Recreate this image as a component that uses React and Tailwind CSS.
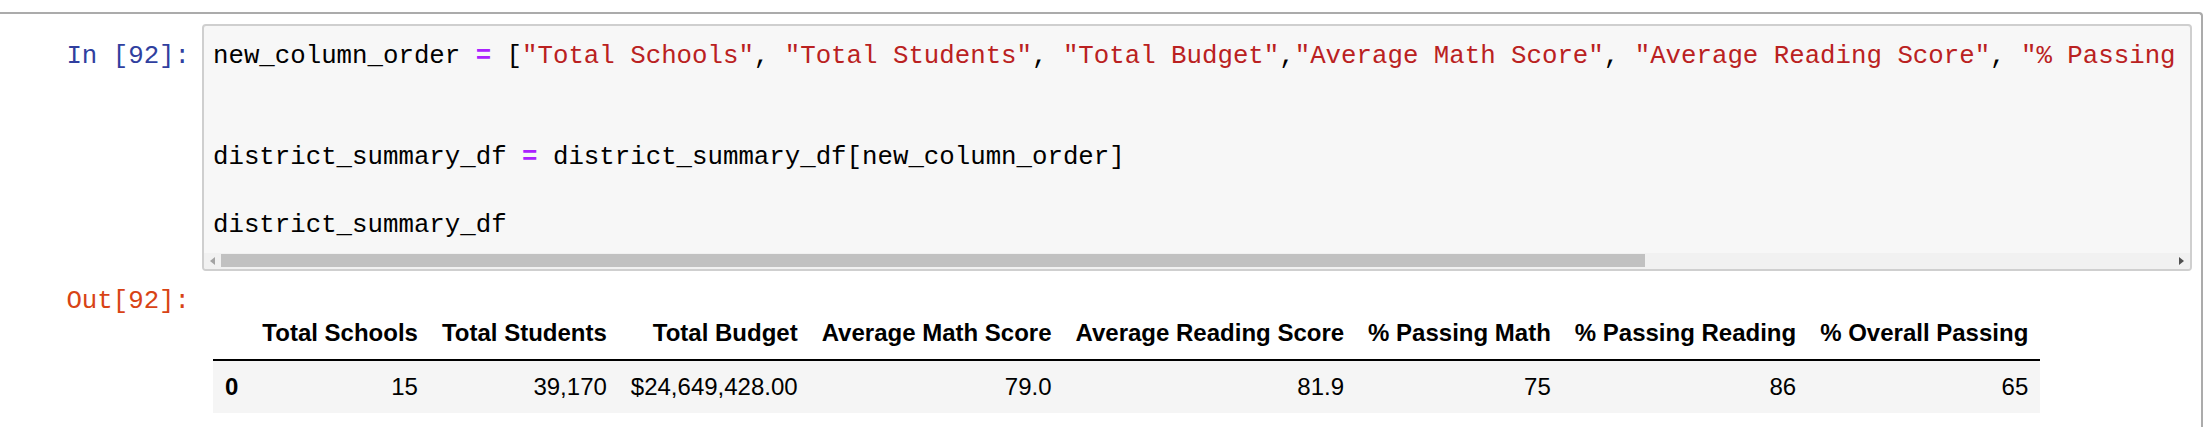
const mono = { fontFamily: '"Liberation Mono", "DejaVu Sans Mono", monospace' };

const columns = [
    'Total Schools',
    'Total Students',
    'Total Budget',
    'Average Math Score',
    'Average Reading Score',
    '% Passing Math',
    '% Passing Reading',
    '% Overall Passing',
];

const row = ['15', '39,170', '$24,649,428.00', '79.0', '81.9', '75', '86', '65'];

function Str({ children }) {
    return <span className="text-[#ba2121]">{children}</span>;
}

function Op({ children }) {
    return <span className="text-[#aa22ff] font-bold">{children}</span>;
}

function Line({ children }) {
    return <div className="h-[33.8px] leading-[33.8px] whitespace-pre">{children}</div>;
}

function ScrollBar() {
    return (
        <div className="flex h-[16px] items-center bg-[#f1f1f1]">
            <div className="flex w-[17px] shrink-0 items-center justify-center">
                <svg width="5" height="8" viewBox="0 0 5 8">
                    <path d="M5 0 L0 4 L5 8 Z" fill="#a3a3a3" />
                </svg>
            </div>
            <div className="h-[13px] w-[1424px] shrink-0 bg-[#c1c1c1]" />
            <div className="flex-1" />
            <div className="flex w-[17px] shrink-0 items-center justify-center">
                <svg width="5" height="8" viewBox="0 0 5 8">
                    <path d="M0 0 L5 4 L0 8 Z" fill="#505050" />
                </svg>
            </div>
        </div>
    );
}

export default function App() {
    return (
        <div className="h-[427px] w-[2205px] overflow-hidden bg-white pt-[12px] text-black">
            <div className="min-h-[440px] w-[2203px] rounded-tr-[4px] border-t-2 border-r-2 border-[#ababab] pt-[10px]">
                {/* input cell */}
                <div className="flex">
                    <div
                        className="w-[202px] shrink-0 pr-[12px] pt-[16px] text-right text-[25.75px] leading-[33.8px] whitespace-pre text-[#303f9f]"
                        style={mono}
                    >
                        In [92]:
                    </div>
                    <div className="w-[1990px] shrink-0 overflow-hidden rounded-[4px] border-2 border-[#cfcfcf] bg-[#f7f7f7]">
                        <div className="overflow-hidden pb-[10px] pl-[9px] pt-[14px] text-[25.75px]" style={mono}>
                            <Line>
                                new_column_order <Op>=</Op> [<Str>"Total Schools"</Str>, <Str>"Total Students"</Str>, <Str>"Total Budget"</Str>,<Str>"Average Math Score"</Str>, <Str>"Average Reading Score"</Str>, <Str>"% Passing Math"</Str>, <Str>"% Passing Reading"</Str>, <Str>"% Overall Passing"</Str>]
                            </Line>
                            <Line> </Line>
                            <Line> </Line>
                            <Line>
                                district_summary_df <Op>=</Op> district_summary_df[new_column_order]
                            </Line>
                            <Line> </Line>
                            <Line>district_summary_df</Line>
                        </div>
                        <ScrollBar />
                    </div>
                </div>

                {/* output cell */}
                <div className="mt-[14px] flex">
                    <div
                        className="w-[202px] shrink-0 pr-[12px] text-right text-[25.75px] leading-[33.7px] whitespace-pre text-[#d84315]"
                        style={mono}
                    >
                        Out[92]:
                    </div>
                    <div className="pl-[11px] pt-[22px]">
                        <table
                            className="border-collapse text-[24px] leading-[28px]"
                            style={{ fontFamily: '"Liberation Sans", Arial, sans-serif' }}
                        >
                            <thead>
                                <tr>
                                    <th className="border-b-2 border-black p-[12px]" />
                                    {columns.map((c) => (
                                        <th key={c} className="whitespace-nowrap border-b-2 border-black p-[12px] text-right font-bold">
                                            {c}
                                        </th>
                                    ))}
                                </tr>
                            </thead>
                            <tbody>
                                <tr className="bg-[#f5f5f5]">
                                    <th className="p-[12px] text-left font-bold">0</th>
                                    {row.map((v, i) => (
                                        <td key={i} className="whitespace-nowrap p-[12px] text-right">
                                            {v}
                                        </td>
                                    ))}
                                </tr>
                            </tbody>
                        </table>
                    </div>
                </div>
            </div>
        </div>
    );
}
